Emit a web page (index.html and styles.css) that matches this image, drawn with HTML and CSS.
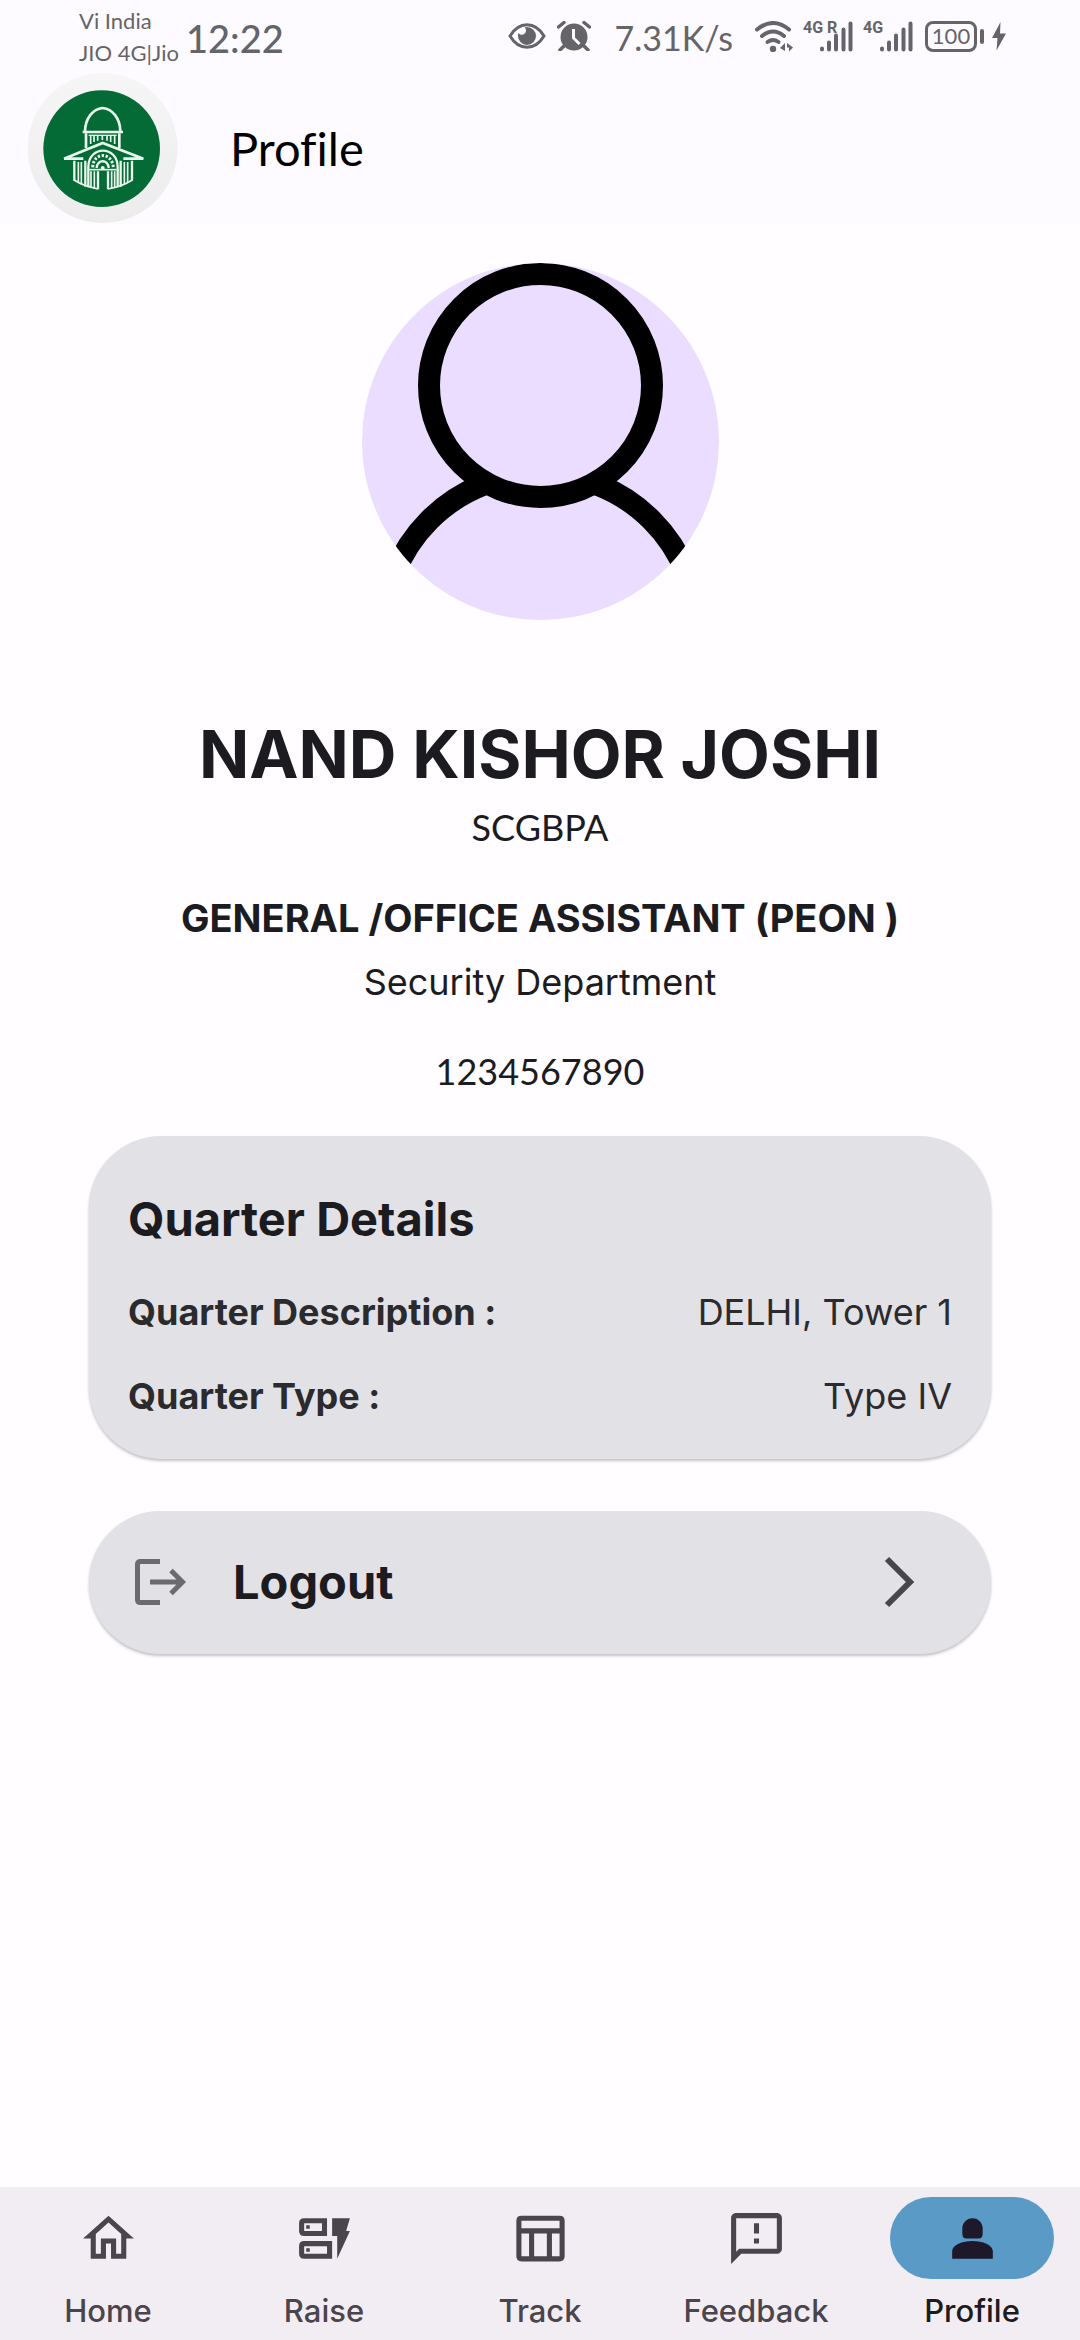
FILE: index.html
```html
<!DOCTYPE html>
<html lang="en">
<head>
<meta charset="utf-8">
<meta name="viewport" content="width=device-width, initial-scale=1">
<title>Profile</title>
<link rel="stylesheet" href="styles.css">
</head>
<body>
<div class="status">
  <div class="carriers"><span>Vi India</span><span>JIO 4G|Jio</span></div>
  <span class="clock">12:22</span>
  <div class="indicators">
    <svg width="38" height="28" viewBox="0 0 38 28"><path d="M2 14C11-1 27-1 36 14C27 29 11 29 2 14Z" fill="none" stroke="currentColor" stroke-width="3"/><path d="M19 5a9 9 0 1 1-9 9c0-1 0-2 .5-3 2 3 7 2 7.500-2 0-2-.5-3-1.500-3.500z" fill="currentColor"/></svg>
    <svg class="alarm" width="34" height="30" viewBox="0 0 34 30"><circle cx="17" cy="16" r="13.500" fill="currentColor"/><path d="M1.500 6L7 1.500M32.500 6L27 1.500M7 25l-4 4M27 25l4 4" stroke="currentColor" stroke-width="3.500" stroke-linecap="round"/><path d="M16.500 8v9l6 6" fill="none" stroke="#fdfbff" stroke-width="3"/></svg>
    <span class="speed">7.31K/s</span>
    <svg class="wifi" width="38" height="31" viewBox="0 0 38 31"><g fill="none" stroke="currentColor" stroke-width="4" stroke-linecap="round"><path d="M2 8.500Q18 -4.500 34 8.500"/><path d="M7 15Q18 6 29 15"/><path d="M12.500 21Q18 17 23.500 21"/></g><circle cx="18" cy="28" r="3.200" fill="currentColor"/><path d="M25 27l5-5v8M32 22l6 4.500-4 4v-4h-2z" fill="currentColor"/></svg>
    <div class="signal"><span class="net">4G R</span><svg width="33" height="31" viewBox="0 0 33 31"><path d="M2 27.500v1M9 21.500v7M16 14.500v14M23.500 8.500v20M30.500 2.500v26" stroke="currentColor" stroke-width="4" stroke-linecap="round"/></svg></div>
    <div class="signal"><span class="net">4G</span><svg width="33" height="31" viewBox="0 0 33 31"><path d="M2 27.500v1M9 21.500v7M16 14.500v14M23.500 8.500v20M30.500 2.500v26" stroke="currentColor" stroke-width="4" stroke-linecap="round"/></svg></div>
    <span class="battery">100</span>
    <svg width="16" height="30" viewBox="0 0 16 30"><path d="M9.500 1L1 17h5.500L5.500 29.500 15 12.500H9z" fill="currentColor"/></svg>
  </div>
</div>
<header class="appbar">
  <svg class="logo" viewBox="24 6 450 456">
    <defs><linearGradient id="rim" x1="0" y1="0" x2="0" y2="1"><stop offset="0" stop-color="#f7f6f7"/><stop offset="1" stop-color="#ececec"/></linearGradient></defs>
    <circle cx="248" cy="234" r="225" fill="url(#rim)"/>
    <circle cx="245" cy="236" r="175" fill="#046b37"/>
    <g fill="none" stroke="#e9f6ec" stroke-width="7">
      <path d="M195 184C196 145 218 117 248 114C278 117 300 145 301 184" stroke-width="8"/>
      <path d="M188 186H309" stroke-width="8"/><path d="M198 190V234M298 190V234" stroke-width="8"/>
      <path d="M212 196V222M222 196V216M233 196V212M247 196V210M261 196V212M272 196V216M284 196V222" stroke-width="5"/>
      <path d="M206 196H290" stroke-width="4"/>
      <path d="M132 266L248 219L370 266H310M132 266H190" stroke-width="8"/>
      <path d="M205 352V292C205 225 293 225 293 292V352"/>
      <path d="M218 292C220 245 276 245 280 292" stroke-width="9" stroke-dasharray="7 5"/>
      <path d="M230 294C232 267 264 267 266 294" stroke-width="7"/>
      <path d="M208 299H290" stroke-width="5"/>
      <circle cx="248" cy="294" r="6" fill="#e9f6ec" stroke="none"/>
      <path d="M163 272V332M336 272V332M196 272V350M302 272V350M234 304V358M264 304V358"/>
      <path d="M175 276V338M184 276V343M313 276V343M323 276V338M213 304V354M223 304V356M275 304V356M284 304V354" stroke-width="5"/>
      <path d="M162 330Q190 348 234 357M264 357Q306 350 337 330" stroke-width="5"/>
    </g>
  </svg>
  <h1 class="title">Profile</h1>
</header>
<main class="main">
  <svg class="avatar" viewBox="0 0 357 357" role="img" aria-label="Profile picture">
    <defs><clipPath id="disc"><circle cx="178.500" cy="178.500" r="178.500"/></clipPath></defs>
    <circle cx="178.500" cy="178.500" r="178.500" fill="#eaddff"/>
    <g clip-path="url(#disc)" stroke="#000" stroke-width="22"><path d="M21.500 368a157 157 0 0 1 314 0" fill="none"/><circle cx="178.500" cy="122.500" r="111.500" fill="#eaddff"/></g>
  </svg>
  <h2 class="name">NAND KISHOR JOSHI</h2>
  <p class="code">SCGBPA</p>
  <p class="role">GENERAL /OFFICE ASSISTANT (PEON )</p>
  <p class="dept">Security Department</p>
  <p class="phone">1234567890</p>
  <section class="card">
    <h3 class="card-title">Quarter Details</h3>
    <dl class="facts">
      <div class="fact"><dt>Quarter Description :</dt><dd>DELHI, Tower 1</dd></div>
      <div class="fact"><dt>Quarter Type :</dt><dd>Type IV</dd></div>
    </dl>
  </section>
  <button class="card logout" type="button">
    <svg width="52" height="48" viewBox="0 0 52 48" fill="none" stroke="#6b6a6e" stroke-width="5"><path d="M26 3.500H6.500Q3.500 3.500 3.500 6.500V41.500Q3.500 44.500 6.500 44.500H26M16 24H48M37 12.500L48.500 24L37 35.500"/></svg>
    <span class="logout-label">Logout</span>
    <svg width="32" height="52" viewBox="0 0 32 52" fill="none" stroke="#47464b" stroke-width="6"><path d="M4 3L27 26L4 49"/></svg>
  </button>
</main>
<nav class="nav">
  <a class="tab" href="#home"><span class="pill"><svg viewBox="0 0 24 24"><path d="M12 5.690l5 4.500V18h-2v-6H9v6H7v-7.810l5-4.500M12 3L2 12h3v8h6v-6h2v6h6v-8h3L12 3z"/></svg></span>Home</a>
  <a class="tab" href="#raise"><span class="pill"><svg viewBox="0 0 24 24"><path fill-rule="evenodd" d="M4 4H13V11H4Q2 11 2 9V6Q2 4 4 4ZM4 6V9H11V6ZM4 13H15V20H4Q2 20 2 18V15Q2 13 4 13ZM4 15V18H13V15ZM4.800 6.800H6.200V8.200H4.800ZM4.800 15.800H6.200V17.200H4.800ZM15 4H22L20.500 9H22L17 20V11H15Z"/></svg></span>Raise</a>
  <a class="tab" href="#track"><span class="pill"><svg viewBox="0 0 24 24"><path fill-rule="evenodd" d="M4.500 3H19.500Q21.500 3 21.500 5V19Q21.500 21 19.500 21H4.500Q2.500 21 2.500 19V5Q2.500 3 4.500 3ZM4.500 5V8H19.500V5ZM4.500 10V19H7.500V10ZM9.500 10V19H14.500V10ZM16.500 10V19H19.500V10Z"/></svg></span>Track</a>
  <a class="tab" href="#feedback"><span class="pill"><svg viewBox="0 0 24 24"><path d="M20 2H4c-1.100 0-2 .9-2 2v18l4-4h14c1.100 0 2-.9 2-2V4c0-1.100-.9-2-2-2zm0 14H5.170L4 17.170V4h16v12zM11 12h2v2h-2zM11 6h2v4h-2z"/></svg></span>Feedback</a>
  <a class="tab active" href="#profile" aria-current="page"><span class="pill"><svg viewBox="0 0 24 24"><path d="M12 4C9.500 4 8 6 8 8V10Q8 12 9.500 12H14.500Q16 12 16 10V8C16 6 14.500 4 12 4ZM4 20V17C4 14.500 8 13 12 13S20 14.500 20 17V20Z"/></svg></span>Profile</a>
</nav>
</body>
</html>
```
FILE: styles.css
```css
* { box-sizing: border-box; }
body {
  margin: 0;
  min-height: 100vh;
  display: flex;
  flex-direction: column;
  background: #fffdff;
  color: #1c1b1f;
  font-family: Lato, "Open Sans", sans-serif;
  font-size: 36px;
  line-height: 48px;
  font-variant-ligatures: none;
}
h1, h2, h3, p, dl, dd { margin: 0; }
svg { display: block; flex: none; }

.status {
  height: 72px;
  padding: 0 73px 0 79px;
  display: flex;
  align-items: center;
  background: #fdfbff;
  color: #656468;
}
.carriers { display: flex; flex-direction: column; font-size: 22px; line-height: 32px; padding-top: 2px; width: 107px; white-space: nowrap; }
.clock { font-size: 38px; font-weight: 500; padding-top: 4px; }
.indicators { margin-left: auto; display: flex; align-items: center; }
.alarm { margin-left: 11px; }
.speed { margin-left: 23px; padding-top: 4px; font-size: 34px; }
.wifi { margin-left: 22px; }
.signal { position: relative; width: 50px; margin-left: 10px; padding-left: 17px; }
.net { position: absolute; left: 0; top: 0; font: 700 16px/14px Roboto, sans-serif; white-space: nowrap; }
.battery {
  position: relative;
  width: 52px;
  height: 31px;
  margin: 0 14px 0 12px;
  border: 3px solid currentColor;
  border-radius: 8px;
  font-size: 22px;
  line-height: 24px;
  text-align: center;
}
.battery::after {
  content: "";
  position: absolute;
  right: -10px;
  top: 5px;
  width: 4px;
  height: 15px;
  border-radius: 2px;
  background: currentColor;
}

.appbar {
  height: 152px;
  padding-left: 28px;
  display: flex;
  align-items: center;
  gap: 52px;
  background: #fdfbff;
}
.logo { width: 150px; height: 152px; }
.title { font-size: 47px; font-weight: 400; color: #000; }

.main {
  flex: 1;
  padding: 39px 89px;
  display: flex;
  flex-direction: column;
  text-align: center;
}
.avatar { width: 357px; height: 357px; align-self: center; }
.name { margin-top: 93px; font-family: Inter, sans-serif; font-size: 66px; line-height: 82px; font-weight: 700; }
.code { margin-top: 8px; }
.role { margin-top: 41px; font-family: Inter, sans-serif; font-size: 38px; line-height: 52px; font-weight: 700; }
.dept { margin-top: 14px; font-family: Inter, sans-serif; }
.phone { margin-top: 41px; }

.card {
  margin-top: 41px;
  padding: 53px 39px 39px;
  border: 0;
  border-radius: 72px;
  background: #e2e1e6;
  box-shadow: 0 2px 3px rgba(0, 0, 0, 0.24);
  color: #1c1b1f;
  text-align: left;
}
.card-title { font: 700 47px/60px Inter, sans-serif; }
.facts { margin-top: 39px; display: flex; flex-direction: column; gap: 36px; font-family: Inter, sans-serif; color: #2b2a2d; }
.fact { display: flex; justify-content: space-between; }
dt { font-weight: 700; }

.logout {
  margin-top: 52px;
  padding: 41px 76px 42px 45px;
  display: flex;
  align-items: center;
  font: 700 47px/60px Inter, sans-serif;
}
.logout-label { flex: 1; margin-left: 47px; }

.nav {
  display: grid;
  grid-template-columns: repeat(5, 1fr);
  padding: 10px 0 9px;
  background: #f2edf3;
}
.tab {
  display: flex;
  flex-direction: column;
  align-items: center;
  gap: 12px;
  color: #4a454d;
  font: 500 31px/40px Inter, sans-serif;
  text-decoration: none;
}
.pill { width: 164px; height: 82px; border-radius: 41px; display: flex; align-items: center; justify-content: center; }
.pill svg { width: 61px; height: 61px; fill: currentColor; }
.active { color: #1d1b20; }
.active .pill { background: #5a9ac6; color: #1d192b; }
```
